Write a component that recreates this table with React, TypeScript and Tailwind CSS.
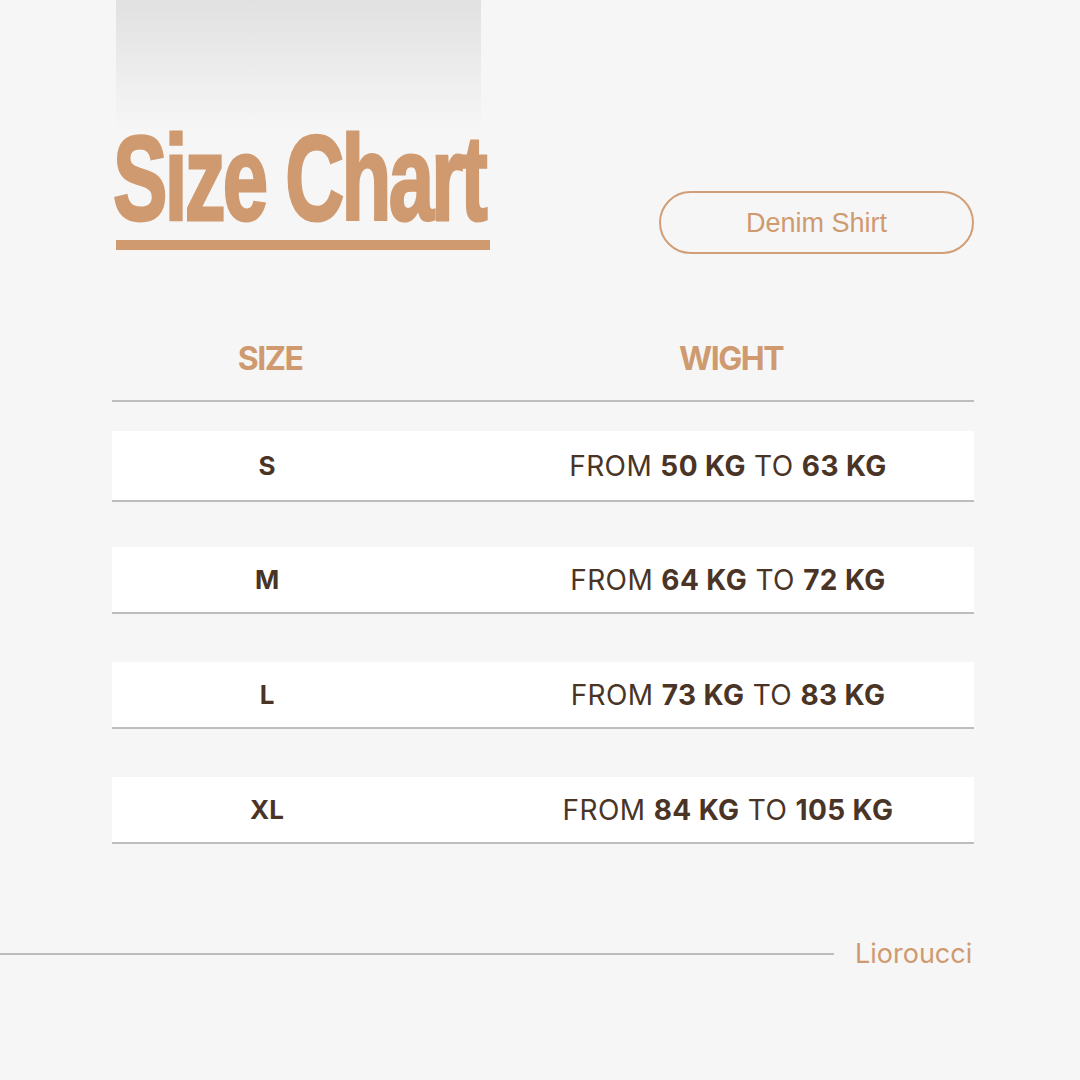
import React from "react";

const rows = [
  { size: "S", from: "50", to: "63" },
  { size: "M", from: "64", to: "72" },
  { size: "L", from: "73", to: "83" },
  { size: "XL", from: "84", to: "105" },
];

const App = () => {
  return (
    <div className="w-[1080px] h-[1080px] bg-[#f6f6f6] overflow-hidden font-['Inter',sans-serif]">
      {/* Title block */}
      <div className="flex items-start pl-[112px] pr-[106px]">
        <div className="w-[378px]">
          <div className="ml-[4px] w-[365px] h-[130px] bg-gradient-to-b from-[#e1e1e1] to-[#f6f6f6]" />
          <h1 className="mt-[-1px] ml-[1px] h-[98px] leading-[98px] text-[120px] font-bold tracking-[-4px] text-[#cf9a70] [-webkit-text-stroke:3px_#cf9a70] font-['Liberation_Sans_Narrow','Liberation_Sans',sans-serif] scale-x-[0.68] origin-left whitespace-nowrap">
            Size Chart
          </h1>
          <div className="ml-[4px] mt-[13px] h-[10px] w-[374px] bg-[#cf9a70]" />
        </div>
        <div className="ml-auto mt-[191px] w-[315px] h-[63px] pt-[2px] rounded-full border-2 border-[#d29e78] flex items-center justify-center text-[27px] text-[#cf9a70] font-['Liberation_Sans',sans-serif]">
          Denim Shirt
        </div>
      </div>

      {/* Table */}
      <div className="mr-[106px] ml-[112px] mt-[78px]">
        <div className="flex h-[70px] items-center pb-[14px] border-b-2 border-[#bdbdbd] text-[32px] font-bold tracking-[-1.5px] text-[#d09a70]">
          <div className="w-[316px] text-center">SIZE</div>
          <div className="flex-1 pl-[60px] text-center">WIGHT</div>
        </div>
        <div className="mt-[29px] flex flex-col">
          {rows.map((r, i) => (
            <div
              key={r.size}
              className={
                i === 0
                  ? "flex h-[71px] items-center bg-white border-b-2 border-[#bdbdbd] text-[28px] text-[#4a3426]"
                  : i === 1
                  ? "mt-[45px] flex h-[67px] items-center bg-white border-b-2 border-[#bdbdbd] text-[28px] text-[#4a3426]"
                  : "mt-[48px] flex h-[67px] items-center bg-white border-b-2 border-[#bdbdbd] text-[28px] text-[#4a3426]"
              }
            >
              <div className="w-[310px] text-center font-bold text-[26px]">{r.size}</div>
              <div className="flex-1 pl-[60px] text-center tracking-[0.4px]">
                FROM <span className="font-bold">{r.from} KG</span> TO{" "}
                <span className="font-bold">{r.to} KG</span>
              </div>
            </div>
          ))}
        </div>
      </div>

      {/* Footer */}
      <div className="mt-[90px] flex items-center">
        <div className="w-[834px] h-[2px] bg-[#bdbdbd]" />
        <div className="ml-[21px] text-[27px] text-[#d09a70]">Lioroucci</div>
      </div>
    </div>
  );
};

export default App;
